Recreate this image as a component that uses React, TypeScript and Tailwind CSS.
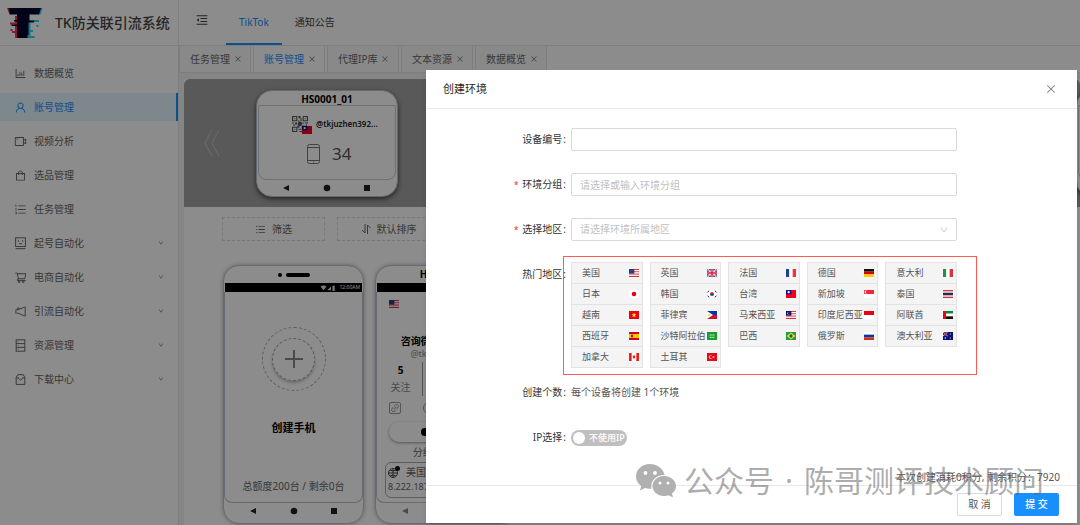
import { useState, type ReactNode } from "react"
import {
  AiOutlineBarChart,
  AiOutlineClose,
  AiOutlineDown,
  AiOutlineLink,
  AiOutlineMenuFold,
  AiOutlineNotification,
  AiOutlineOrderedList,
  AiOutlineShopping,
  AiOutlineShoppingCart,
  AiOutlineUnorderedList,
  AiOutlineUser,
  AiOutlineVideoCamera,
} from "react-icons/ai"

const MENU: { label: string; icon: ReactNode; open?: boolean }[] = [
  { label: "数据概览", icon: <AiOutlineBarChart /> },
  { label: "账号管理", icon: <AiOutlineUser /> },
  { label: "视频分析", icon: <AiOutlineVideoCamera /> },
  { label: "选品管理", icon: <AiOutlineShopping /> },
  { label: "任务管理", icon: <AiOutlineOrderedList /> },
  { label: "起号自动化", icon: <FaceIcon />, open: true },
  { label: "电商自动化", icon: <AiOutlineShoppingCart />, open: true },
  { label: "引流自动化", icon: <AiOutlineNotification className="-scale-x-100 rotate-180" />, open: true },
  { label: "资源管理", icon: <CabinetIcon />, open: true },
  { label: "下载中心", icon: <BoxIcon />, open: true },
]

const TABS = ["任务管理", "账号管理", "代理IP库", "文本资源", "数据概览"]

const REGIONS = [
  ["美国", "us"], ["英国", "gb"], ["法国", "fr"], ["德国", "de"], ["意大利", "it"],
  ["日本", "jp"], ["韩国", "kr"], ["台湾", "tw"], ["新加坡", "sg"], ["泰国", "th"],
  ["越南", "vn"], ["菲律宾", "ph"], ["马来西亚", "my"], ["印度尼西亚", "id"], ["阿联酋", "ae"],
  ["西班牙", "es"], ["沙特阿拉伯", "sa"], ["巴西", "br"], ["俄罗斯", "ru"], ["澳大利亚", "au"],
  ["加拿大", "ca"], ["土耳其", "tr"],
]

function rows(...colors: string[]) {
  const h = 12 / colors.length
  return colors.map((c, i) => <rect key={i} y={i * h} width="15" height={h} fill={c} />)
}

function cols(...colors: string[]) {
  const w = 15 / colors.length
  return colors.map((c, i) => <rect key={i} x={i * w} width={w} height="12" fill={c} />)
}

const STRIPES = rows("#d8343f", "#fff", "#d8343f", "#fff", "#d8343f", "#fff", "#d8343f")

const FLAGS: Record<string, ReactNode> = {
  us: <>{STRIPES}<rect width="8" height="7" fill="#2b3f7e" /></>,
  gb: (
    <>
      <rect width="15" height="12" fill="#1f2f75" />
      <path d="M0 0L15 12M15 0L0 12" stroke="#fff" strokeWidth="2.6" />
      <path d="M0 0L15 12M15 0L0 12" stroke="#d3183a" strokeWidth="1" />
      <path d="M7.5 0V12M0 6H15" stroke="#fff" strokeWidth="4" />
      <path d="M7.5 0V12M0 6H15" stroke="#d3183a" strokeWidth="2.2" />
    </>
  ),
  fr: cols("#21409a", "#fff", "#ef3340"),
  de: rows("#111", "#d80000", "#ffce00"),
  it: cols("#1a9447", "#fff", "#d8343f"),
  jp: <><rect width="15" height="12" fill="#fff" /><circle cx="7.5" cy="6" r="3.4" fill="#e60012" /></>,
  kr: (
    <>
      <rect width="15" height="12" fill="#fff" />
      <path d="M4.5 6a3 3 0 016 0z" fill="#cd2e3a" />
      <path d="M4.5 6a3 3 0 006 0z" fill="#0f4593" />
      <path d="M1 3.5L3 1M12 1l2 2.500M1 8.500L3 11M12 11l2-2.500" stroke="#222" strokeWidth="1.500" />
    </>
  ),
  tw: (
    <>
      <rect width="15" height="12" fill="#f5001d" />
      <rect width="8" height="6.500" fill="#14148c" />
      <circle cx="4" cy="3.200" r="1.700" fill="#fff" />
    </>
  ),
  sg: <>{rows("#ed2939", "#fff")}<path d="M4 1a2.200 2.200 0 100 4 2.500 2.500 0 010-4z" fill="#fff" /></>,
  th: (
    <>
      <rect width="15" height="12" fill="#c43a4e" />
      <rect y="2" width="15" height="8" fill="#fff" />
      <rect y="4" width="15" height="4" fill="#2d2a4a" />
    </>
  ),
  vn: (
    <>
      <rect width="15" height="12" fill="#ec0015" />
      <path d="M7.500 2.500l1 2.500h2.500l-2 1.700.8 2.600-2.300-1.600-2.300 1.600.8-2.600-2-1.700h2.500z" fill="#ff0" />
    </>
  ),
  ph: <>{rows("#0038a8", "#ce1126")}<path d="M0 0L9 6L0 12z" fill="#fff" /><circle cx="3" cy="6" r="1.500" fill="#fcd116" /></>,
  my: (
    <>
      {STRIPES}
      <rect width="8" height="7" fill="#10106b" />
      <circle cx="3.500" cy="3.500" r="1.800" fill="#fc0" />
      <circle cx="4.300" cy="3.500" r="1.500" fill="#10106b" />
    </>
  ),
  id: rows("#e70011", "#fff"),
  ae: <>{rows("#00843d", "#fff", "#111")}<rect width="4.500" height="12" fill="#f00" /></>,
  es: <>{rows("#c60b1e", "#ffc400", "#ffc400", "#c60b1e")}<rect x="3" y="4" width="3" height="4" fill="#ad1519" /></>,
  sa: (
    <>
      <rect width="15" height="12" fill="#1c9c2c" />
      <path d="M4 4.500H11M4 8H11" stroke="#fff" strokeWidth="1.300" strokeDasharray="2 .5" />
    </>
  ),
  br: (
    <>
      <rect width="15" height="12" fill="#229e45" />
      <path d="M7.500 1L14 6L7.500 11L1 6z" fill="#f8e509" />
      <circle cx="7.500" cy="6" r="2.500" fill="#2b49a3" />
    </>
  ),
  ru: rows("#fff", "#0039a6", "#d52b1e"),
  au: (
    <>
      <rect width="15" height="12" fill="#0a1172" />
      <path d="M0 0L7 6M7 0L0 6" stroke="#fff" strokeWidth="1.200" />
      <path d="M3.500 0V6M0 3H7" stroke="#e0203a" strokeWidth="1.400" />
      <circle cx="3.500" cy="9" r="1.100" fill="#fff" />
      <circle cx="11" cy="3" r=".9" fill="#fff" />
      <circle cx="11" cy="9" r=".9" fill="#fff" />
    </>
  ),
  ca: (
    <>
      <rect width="15" height="12" fill="#fff" />
      <path d="M0 0H4V12H0zM11 0H15V12H11z" fill="#e8201c" />
      <path d="M7.500 2.500L9.800 6L8 8V9.500H7V8L5.200 6z" fill="#e8201c" />
    </>
  ),
  tr: (
    <>
      <rect width="15" height="12" fill="#e30a17" />
      <circle cx="5.500" cy="6" r="2.800" fill="#fff" />
      <circle cx="6.300" cy="6" r="2.200" fill="#e30a17" />
      <circle cx="10" cy="6" r="1.200" fill="#fff" />
    </>
  ),
}

function Flag({ code }: { code: string }) {
  return (
    <svg viewBox="0 0 15 12" className="h-2 w-2.5 shrink-0" preserveAspectRatio="none" aria-hidden="true">
      {FLAGS[code]}
    </svg>
  )
}

function FaceIcon() {
  return (
    <svg viewBox="0 0 24 24" width="1em" height="1em" fill="none" stroke="currentColor" strokeWidth="1.800">
      <rect x="3" y="1.500" width="18" height="16" />
      <path d="M3 21.500H21M9 12.500H15M8 6V9M16 6V9" />
    </svg>
  )
}

function CabinetIcon() {
  return (
    <svg viewBox="0 0 24 24" width="1em" height="1em" fill="none" stroke="currentColor" strokeWidth="1.800">
      <rect x="4" y="1.500" width="16" height="21" />
      <path d="M4 8.500H20M4 15.500H20M7 5H8.500M7 12H8.500M7 19H8.500" />
    </svg>
  )
}

function BoxIcon() {
  return (
    <svg viewBox="0 0 24 24" width="1em" height="1em" fill="none" stroke="currentColor" strokeWidth="1.800">
      <path d="M4 8L7 3H17L20 8V21H4zM4 9H8.500C9 14 15 14 15.500 9H20" />
    </svg>
  )
}

function Logo() {
  return (
    <svg viewBox="0 0 36 32" className="h-8 w-9 shrink-0" aria-hidden="true">
      <path d="M0 1H4V7.500H2.500zM8 9H11V31H8zM3 15.500H9V17.500H3zM5 24H10V26H5zM3.500 22H5.500V24H3.500z" fill="#ff2d55" />
      <path d="M32 1H35.500L33.500 7.500H31zM20 14H23.500V31H20zM22 13H32V15H22zM22 29H27.500V31H22zM29.500 18H31.500V20H29.500zM23 23H26V25H23z" fill="#25d9f5" />
      <path d="M1.500 1H34L32 7.500H22.500V13.500H27V15.500H21.500V28H20.500V31H10V19H4.500V17.500H10V14.500H7V13H10V7.500H3z" fill="#04062e" />
    </svg>
  )
}

function QrCode() {
  return (
    <svg viewBox="0 0 15 15" className="size-4" fill="#555" aria-hidden="true">
      <path d="M0 0H5V5H0zM1 1V4H4V1zM10 0H15V5H10zM11 1V4H14V1zM0 10H5V15H0zM1 11V14H4V11z" fillRule="evenodd" />
      <path d="M2 2h1v1H2zM12 2h1v1h-1zM2 12h1v1H2zM6 0h2v2H6zM8 2h1v3H8zM6 4h1v2H6zM0 6h2v1H0zM3 6h2v2H3zM1 8h2v1H1zM9 6h2v1H9zM12 6h3v1h-3zM5 9h2v2H5zM9 9h3v2H9zM13 8h1v3h-1zM6 12h3v1H6zM7 14h3v1H7zM10 12h2v2h-2zM13 13h2v2h-2z" />
      <circle cx="7.500" cy="7.500" r="2" />
    </svg>
  )
}

function AndroidNav({ className = "" }: { className?: string }) {
  return (
    <svg viewBox="0 0 90 8" className={`mx-auto h-2 w-[90px] fill-current ${className}`} aria-hidden="true">
      <path d="M7 1V7L1 4zM82 1H88V7H82z" />
      <circle cx="45" cy="4" r="3.300" />
    </svg>
  )
}

function DeviceCard({ children }: { children?: ReactNode }) {
  return (
    <div className="flex h-[107px] w-[142px] shrink-0 flex-col rounded-2xl border border-[#b9c0c9] bg-white px-px shadow-[0_2px_5px_rgba(0,0,0,0.6)]">
      <div className="h-[14px] text-center text-[10px] leading-4 font-bold text-black">{children && "HS0001_01"}</div>
      <div className="h-[75px] rounded-b-lg border border-[#c8ced6] pt-2.5">{children}</div>
      <AndroidNav className="mt-1 text-[#222]" />
    </div>
  )
}

function Phone({ title, dim, children }: { title: ReactNode; dim?: boolean; children: ReactNode }) {
  return (
    <article className="flex h-[259px] w-[141px] shrink-0 flex-col rounded-[16px] border border-[#b9c3cc] bg-white shadow-[0_0_4px_rgba(0,0,0,0.3)]">
      <div className="flex h-[17px] items-center justify-center gap-1 text-[10px] font-bold text-black">{title}</div>
      <div className="mx-px flex h-[9px] items-center justify-end gap-[3px] bg-black px-0.5 text-[5px] text-white">
        <svg viewBox="0 0 20 8" className="h-1.5 w-4" fill="#ddd" aria-hidden="true">
          <path d="M0 2Q4-1 8 2L4 7zM9 7L14 2V7zM16 1H19V8H16z" />
        </svg>
        <span>12:00AM</span>
      </div>
      <div className="h-[211px] rounded-b-lg border border-t-0 border-[#b9c3cc]">{children}</div>
      <AndroidNav className={dim ? "mt-1 text-[#888]" : "mt-1 text-[#222]"} />
    </article>
  )
}

function Field({ label, id, required, children }: { label: string; id?: string; required?: boolean; children: ReactNode }) {
  return (
    <div className="flex h-[23px] items-center gap-1">
      <label htmlFor={id} className="w-[141px] shrink-0 text-right leading-[23px] text-[#333]">
        {required && <span className="mr-1 text-[8px] text-[#f5222d]">*</span>}
        {label}
        <span className="mx-px">:</span>
      </label>
      <div className="flex w-[386px] items-center">{children}</div>
    </div>
  )
}

function CreateDialog() {
  const [device, setDevice] = useState("")
  const [group, setGroup] = useState("")
  const [region, setRegion] = useState("")
  const box = "h-[23px] w-full rounded-[2px] border border-[#d9d9d9] bg-white px-2 outline-none placeholder:text-[#bfbfbf]"

  return (
    <section role="dialog" aria-label="创建环境" className="w-[651px] self-start bg-white text-[10px] text-[#555] shadow-md">
      <header className="flex h-[39px] items-center justify-between border-b border-[#e8e8e8] pr-5 pl-[17px]">
        <h2 className="text-[11px] text-[#262626]">创建环境</h2>
        <button type="button" aria-label="关闭" className="text-[12px] text-[#888]">
          <AiOutlineClose />
        </button>
      </header>

      <form>
        <div className="flex flex-col gap-[22px] pt-[19px]">
          <Field label="设备编号" id="device">
            <input id="device" className={box} value={device} onChange={(e) => setDevice(e.target.value)} />
          </Field>
          <Field label="环境分组" id="group" required>
            <input
              id="group"
              className={box}
              placeholder="请选择或输入环境分组"
              value={group}
              onChange={(e) => setGroup(e.target.value)}
            />
          </Field>
          <Field label="选择地区" id="region" required>
            <div className="relative w-full">
              <select
                id="region"
                className={`${box} appearance-none ${region ? "" : "text-[#bfbfbf]"}`}
                value={region}
                onChange={(e) => setRegion(e.target.value)}
              >
                <option value="">请选择环境所属地区</option>
                {REGIONS.map(([name, code]) => (
                  <option key={code} value={code}>{name}</option>
                ))}
              </select>
              <AiOutlineDown className="pointer-events-none absolute top-[7px] right-2 text-[#bfbfbf]" />
            </div>
          </Field>

          {/* Popular regions */}
          <div className="flex items-start gap-1">
            <span className="w-[141px] shrink-0 text-right leading-[23px] text-[#333]">
              热门地区<span className="mx-px">:</span>
            </span>
            <div className="relative w-[386px]">
              <div className="grid grid-cols-5 gap-x-[7px]">
                {REGIONS.map(([name, code]) => (
                  <button
                    key={code}
                    type="button"
                    onClick={() => setRegion(code)}
                    className="-mt-px flex h-[22px] items-center justify-between border border-[#e3e3e3] bg-[#f4f4f4] pr-[3px] pl-2.5 text-[9px] whitespace-nowrap text-[#555]"
                  >
                    {name}
                    <Flag code={code} />
                  </button>
                ))}
              </div>
              <div className="pointer-events-none absolute -top-[7px] -right-5 -bottom-[7px] -left-2 border border-[#ff5b5b]" />
            </div>
          </div>
        </div>

        <div className="flex flex-col gap-[22px] pt-[13px]">
          <Field label="创建个数">每个设备将创建 1个环境</Field>
          <Field label="IP选择" id="use-ip">
            <label className="flex h-4 w-14 cursor-pointer items-center gap-1 rounded-full bg-[#bfbfbf] px-0.5 text-[9px] font-medium text-white has-checked:bg-[#1890ff]">
              <input id="use-ip" type="checkbox" role="switch" className="size-3 shrink-0 appearance-none rounded-full bg-white" />
              不使用IP
            </label>
          </Field>
        </div>

        <p className="mt-5 pr-[17px] text-right leading-4">本次创建消耗0积分, 剩余积分：7920</p>

        <footer className="flex justify-end gap-3 border-t border-[#e8e8e8] py-[7px] pr-[18px]">
          <button type="button" className="h-[23px] w-[45px] rounded-[2px] border border-[#d9d9d9] text-[10px]">
            取 消
          </button>
          <button type="submit" className="h-[23px] w-[45px] rounded-[2px] bg-[#1890ff] text-[10px] font-medium text-white">
            提 交
          </button>
        </footer>
      </form>
    </section>
  )
}

function Watermark() {
  return (
    <div className="pointer-events-none absolute right-9 bottom-6 flex items-center text-[30px] leading-10 text-[#666]/55">
      <svg viewBox="0 0 40 34" className="mr-2 h-[34px] w-10" aria-hidden="true">
        <path
          d="M14 0C6 0 0 5.500 0 12.500c0 4 2 7.200 5.200 9.500L4 26.500l5-2.500c2 .6 4 .9 6.500.8C14 17 20 11 28.500 11 27 4 21 0 14 0z"
          fill="#b0b0b0"
        />
        <path
          d="M28 12c-6.500 0-11.500 4.500-11.500 10S21.500 32 28 32c1.700 0 3.300-.3 4.700-.8L37 33.500 36 29.500c2.500-1.800 4-4.500 4-7.500 0-5.500-5.500-10-12-10z"
          fill="#b0b0b0"
        />
        <g fill="#fff">
          <circle cx="9.500" cy="9" r="1.900" />
          <circle cx="19" cy="9" r="1.900" />
          <circle cx="24" cy="19" r="1.500" />
          <circle cx="32" cy="19" r="1.500" />
        </g>
      </svg>
      <span>公众号</span>
      <span className="w-[30px] text-center">·</span>
      <span>陈哥测评技术顾问</span>
    </div>
  )
}

export default function App() {
  return (
    <div className="relative flex h-screen overflow-hidden bg-[#f0f2f5] font-['Noto_Sans','Noto_Sans_CJK_SC',sans-serif] text-[10px] text-[#666]">
      {/* Sidebar */}
      <aside className="w-[179px] shrink-0 border-r border-[#e3e6ea] bg-white">
        <div className="flex h-[46px] items-center gap-3 border-b border-[#e8e8e8] pl-[7px]">
          <Logo />
          <h1 className="text-[14px] font-medium whitespace-nowrap text-[#444]">TK防关联引流系统</h1>
        </div>
        <nav className="flex flex-col gap-1.5 pt-[13px]">
          {MENU.map((item) => (
            <a
              key={item.label}
              href="#"
              className={`flex h-7 items-center border-r-2 pr-3 pl-3.5 ${
                item.label === "账号管理" ? "border-[#1890ff] bg-[#e6f7ff] text-[#1890ff]" : "border-transparent"
              }`}
            >
              <span className="mr-[7px] text-[13px]">{item.icon}</span>
              {item.label}
              {item.open && <AiOutlineDown className="ml-auto text-[6px]" />}
            </a>
          ))}
        </nav>
      </aside>

      <main className="min-w-0 flex-1">
        {/* Top nav */}
        <header className="flex h-[46px] border-b border-[#e8e8e8] bg-white pl-4 text-[#444]">
          <button type="button" aria-label="收起菜单" className="mr-[17px] h-10 text-[14px]">
            <AiOutlineMenuFold />
          </button>
          <a href="#" className="h-[45px] border-b-2 border-[#1890ff] px-[13px] leading-[44px] text-[#1890ff]">TikTok</a>
          <a href="#" className="px-[13px] leading-[44px]">通知公告</a>
        </header>

        <div className="flex h-[27px] gap-0.5 border-b border-[#e0e3e8] bg-white">
          {TABS.map((tab) => (
            <div
              key={tab}
              className={`flex w-[72px] items-center gap-1 border-x border-[#e4e4e4] pl-2.5 ${
                tab === "账号管理" ? "bg-white text-[#1890ff]" : "bg-[#fafafa]"
              }`}
            >
              <a href="#" className="whitespace-nowrap">{tab}</a>
              <button type="button" aria-label={`关闭${tab}`} className="text-[8px] text-[#777]">
                <AiOutlineClose />
              </button>
            </div>
          ))}
        </div>

        <div className="mt-1.5 ml-[5px] bg-white">
          {/* Device carousel */}
          <div className="flex h-32 items-center gap-[63px] overflow-hidden rounded-t-md bg-[#a2a2a2] pl-[19px]">
            <button type="button" aria-label="上一页" className="-mr-7 shrink-0">
              <svg viewBox="0 0 18 28" className="h-7 w-[18px]" fill="none" stroke="#b8b8b8" strokeWidth="1.500">
                <path d="M9 1L2 14L9 27M16 1L9 14L16 27" />
              </svg>
            </button>
            <DeviceCard>
              <div className="flex items-center pl-[33px]">
                <div className="relative mr-2">
                  <QrCode />
                  <span className="absolute -right-1 -bottom-0.5"><Flag code="tw" /></span>
                </div>
                <span className="text-[8px] font-semibold text-[#222]">@tkjuzhen392...</span>
              </div>
              <div className="mt-2.5 flex items-center gap-3 pl-[48px] text-[17px] leading-6 text-[#555]">
                <svg viewBox="0 0 13 20" className="h-5 w-[13px]" fill="none" stroke="#777" aria-hidden="true">
                  <rect x=".5" y=".5" width="12" height="19" rx="2" />
                  <path d="M1 3.500H12M1 16.500H12M6 18H7" />
                </svg>
                34
              </div>
            </DeviceCard>
            {[1, 2, 3, 4].map((n) => <DeviceCard key={n} />)}
          </div>

          <div className="flex gap-3 pt-2.5 pl-[38px]">
            <button type="button" className="flex h-6 w-[103px] items-center justify-center gap-1.5 border border-dashed border-[#d9d9d9]">
              <AiOutlineUnorderedList className="text-[11px]" />
              筛选
            </button>
            <button type="button" className="flex h-6 w-[103px] items-center justify-center gap-1.5 border border-dashed border-[#d9d9d9]">
              <svg viewBox="0 0 10 10" className="size-2.5" fill="none" stroke="currentColor" aria-hidden="true">
                <path d="M4 0V9L1 6M6.500 10V1L9.500 4" />
              </svg>
              默认排序
            </button>
          </div>

          {/* Phones */}
          <div className="flex gap-[11px] pt-6 pb-6 pl-[39px]">
            <Phone
              title={
                <>
                  <span className="size-1 rounded-full bg-black" />
                  <span className="h-1 w-6 rounded-full bg-black" />
                </>
              }
            >
              <div className="flex h-full flex-col items-center pt-[35px]">
                <button
                  type="button"
                  aria-label="创建手机"
                  className="flex size-16 items-center justify-center rounded-full border border-dashed border-[#aaa]"
                >
                  <span className="flex size-[43px] items-center justify-center rounded-full border border-dashed border-[#999] shadow-[0_2px_3px_rgba(0,0,0,0.25)]">
                    <svg viewBox="0 0 18 18" className="size-[18px]" stroke="#888" strokeWidth="2" aria-hidden="true">
                      <path d="M9 0V18M0 9H18" />
                    </svg>
                  </span>
                </button>
                <strong className="mt-[29px] text-[11px] leading-4 font-bold text-black">创建手机</strong>
                <span className="mt-auto mb-2 whitespace-nowrap">总额度200台 / 剩余0台</span>
              </div>
            </Phone>

            <Phone title="HS0001_01" dim>
              <div className="px-3 pt-2">
                <Flag code="us" />
                <div className="mt-6 text-center text-[10px] leading-[18px] font-bold whitespace-nowrap text-black">咨询微信tkjuzhen3</div>
                <div className="text-center text-[9px] leading-2 text-[#888]">@tkjuzhen39201</div>
                <div className="mt-1 flex items-center divide-x divide-[#999] text-center">
                  <div className="w-[34px] pr-2.5 leading-[17px]">
                    <b className="block text-black">5</b>
                    <span className="whitespace-nowrap text-[#888]">关注</span>
                  </div>
                  <div className="h-6 w-10" />
                </div>
                <div className="mt-1.5 flex gap-[22px] text-[#888]">
                  <span className="rounded-[2px] border border-[#999]"><AiOutlineLink /></span>
                  <span className="size-3 rounded-full border border-[#999]" />
                </div>
              </div>
              <div className="mx-3 mt-2 h-5 rounded-full bg-white py-1.5 pl-8 shadow-[0_1px_3px_rgba(0,0,0,0.4)]">
                <span className="block h-2 w-2 rounded-full bg-black" />
              </div>
              <div className="text-center leading-5">分组: 默认分组</div>
              <div className="mx-2 h-9 rounded-md border border-[#aaa] px-0.5">
                <div className="flex items-center gap-1.5 leading-[18px]">
                  <svg viewBox="0 0 12 12" className="size-3" fill="none" stroke="#444" aria-hidden="true">
                    <circle cx="5" cy="7" r="4.500" />
                    <path d="M.5 7H9.500M5 2.500V11.500M2 4Q5 6 8 4M2 10Q5 8 8 10" />
                    <circle cx="9.500" cy="2.500" r="2.500" fill="#111" stroke="none" />
                  </svg>
                  美国
                </div>
                <div className="text-[9px] leading-3">8.222.187.</div>
              </div>
            </Phone>
          </div>
        </div>
      </main>

      {/* Modal layer */}
      <div className="absolute inset-0 flex justify-end bg-black/45 pt-[70px] pr-[3px]">
        <CreateDialog />
        <Watermark />
      </div>
    </div>
  )
}
